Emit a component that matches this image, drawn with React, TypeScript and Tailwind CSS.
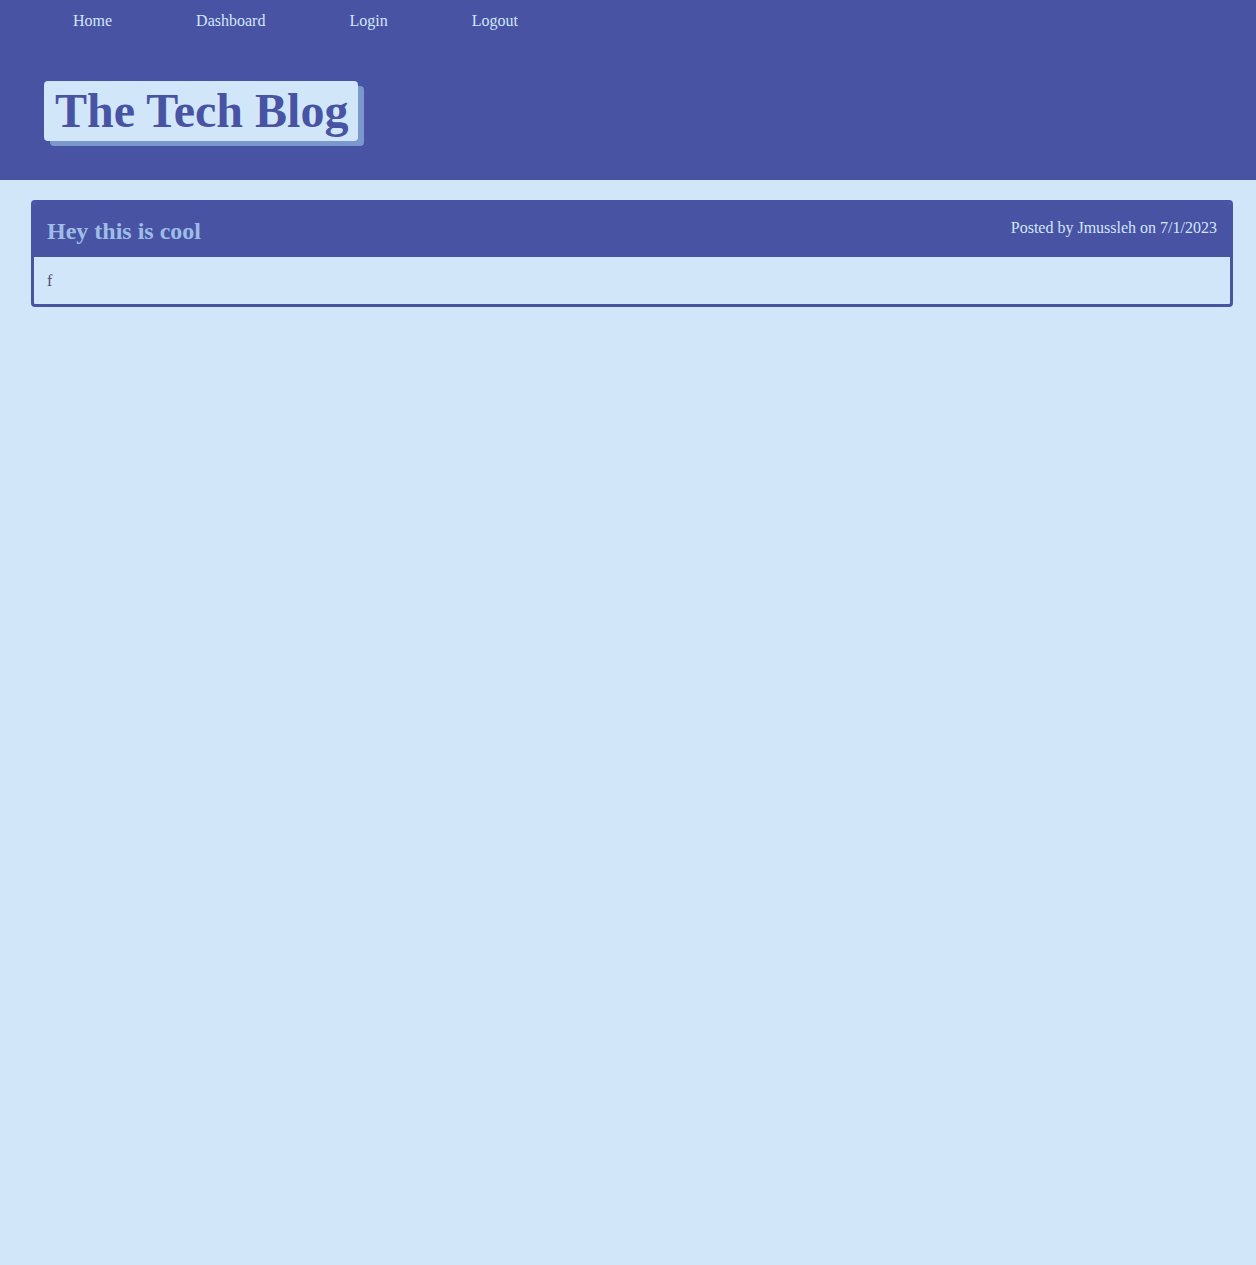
export default function App() {
  const links = ['Home', 'Dashboard', 'Login', 'Logout'];
  return (
    <div className="min-h-[1265px] bg-[#d2e6fa] font-['Liberation_Serif',serif]">
      {/* Header */}
      <header className="h-[180px] bg-[#4853a3]">
        <nav className="flex h-[42px] items-center gap-[84px] pl-[73px] text-[16px] text-[#d2e6fa]">
          {links.map((l) => (
            <a key={l} href="#" className="leading-none">
              {l}
            </a>
          ))}
        </nav>
        <div className="pl-[44px] pt-[39px]">
          <h1 className="inline-block h-[60px] rounded-[4px] bg-[#d2e6fa] pl-[11px] pr-[10px] text-[48px] font-bold leading-[60px] text-[#4853a3] shadow-[6px_5px_0_#7b98cc]">
            The Tech Blog
          </h1>
        </div>
      </header>

      {/* Posts */}
      <main className="pl-[31px] pr-[23px] pt-[20px]">
        <article className="overflow-hidden rounded-[4px] border-[3px] border-[#4853a3]">
          <div className="flex h-[54px] items-center justify-between bg-[#4853a3] pl-[13px] pr-[13px]">
            <h2 className="pt-[1px] text-[24px] font-bold text-[#9dbde6]">Hey this is cool</h2>
            <p className="-mt-[5px] text-[16px] text-[#d2e6fa]">Posted by Jmussleh on 7/1/2023</p>
          </div>
          <div className="flex h-[47px] items-center px-[13px] text-[16px] text-[#4a4a7a]">f</div>
        </article>
      </main>
    </div>
  );
}
